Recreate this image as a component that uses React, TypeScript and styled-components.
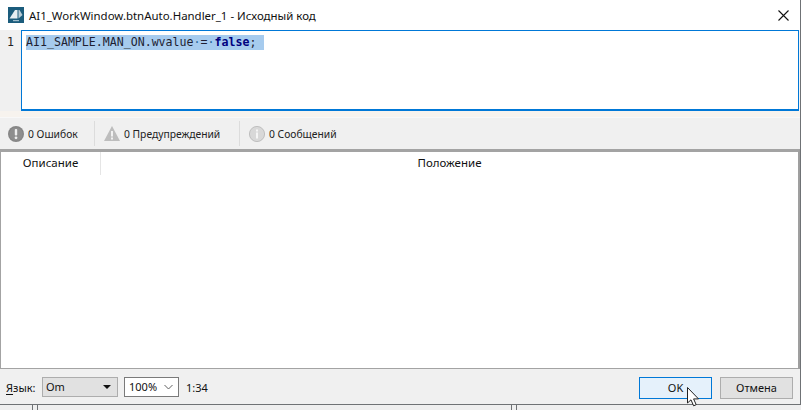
import React from "react";
import styled, { createGlobalStyle } from "styled-components";

const Global = createGlobalStyle`
  html, body { margin: 0; padding: 0; background: #f0f0f0; }
  body { font-family: "Noto Sans", "Open Sans", sans-serif; }
  * { box-sizing: border-box; }
`;
const Page = styled.div`
  width: 801px; height: 410px; overflow: hidden; display: flex; flex-direction: column; position: relative;
`;
const Win = styled.div`
  width: 801px; height: 405px; flex: none; display: flex; flex-direction: column;
  border-right: 1px solid #6f7275; border-bottom: 1px solid #6f7275; background: #f0f0f0;
`;
const Backdrop = styled.div`
  flex: 1; display: flex; background: #efefef;
`;
const Tick = styled.div<{ $ml: number }>`
  width: 1px; background: #6f7275; margin-left: ${p => p.$ml}px;
`;
const Title = styled.div`
  height: 30px; flex: none; background: #fff; display: flex; align-items: center; padding-left: 8px;
  color: #111;
`;
const TitleText = styled.span`
  margin-left: 5px; font-family: "Noto Sans", sans-serif; font-size: 11.45px;
`;
const CloseBtn = styled.div`
  margin-left: auto; margin-right: 11px; width: 11px; height: 11px; display: flex;
`;
const EditorRow = styled.div`
  height: 81px; flex: none; display: flex; background: #f5f5f5;
`;
const Gutter = styled.div`
  width: 21px; flex: none; background: #f0f0f0; padding: 5px 0 0 7px;
  font: 11.5px "DejaVu Sans Mono", monospace; color: #222;
`;
const Editor = styled.div`
  flex: 1; margin-right: 1px; background: #fff; border: 1px solid #0078d7; border-bottom-width: 2px; padding: 4px 0 0 4px;
  font: 11.6px/15px "DejaVu Sans Mono", monospace;
`;
const Sel = styled.span`
  display: inline-block; width: 238px; height: 15px; background: #a6cbee; color: #1e1e32; white-space: pre;
`;
const Keyword = styled.b`
  color: #00007f;
`;
const Dot = styled.span`
  color: #2a6a9a;
`;
const Gap = styled.div`
  height: 6px; flex: none; background: #f7f3ee;
`;
const Toolbar = styled.div`
  height: 32px; flex: none; background: #f0f0f0; display: flex; align-items: center; padding-left: 8px;
  border-top: 1px solid #f8f8f8;
`;
const Stat = styled.div<{ $w: number }>`
  width: ${p => p.$w}px; display: flex; align-items: center; gap: 4px; height: 100%;
  font: 10.3px "Noto Sans", sans-serif; color: #222;
`;
const Sep = styled.div`
  width: 1px; height: 25px; background: #dcdcdc; margin-right: 9px;
`;
const Table = styled.div`
  flex: 1; background: #fff; border-top: 3px solid #a3a3a3; border-left: 1px solid #a3a3a3; border-right: 2px solid #9f9f9f; border-bottom: 1px solid #a3a3a3;
`;
const Head = styled.div`
  display: flex; height: 23px; font: 11.5px/22px "Noto Sans", sans-serif; color: #111;
`;
const ColA = styled.div`
  width: 100px; flex: none; text-align: center; border-right: 1px solid #e5e5e5;
`;
const ColB = styled.div`
  flex: 1; text-align: center;
`;
const Footer = styled.div`
  height: 35px; flex: none; background: #f0f0f0; display: flex; align-items: flex-start; padding: 8px 6px 0 6px;
  font: 11px "Noto Sans", sans-serif; color: #111;
`;
const Label = styled.span`
  line-height: 22px; margin-right: 6px; width: 30px;
  u { text-underline-offset: 2px; }
`;
const OmSelect = styled.div`
  width: 76px; height: 20px; background: #e1e1e1; border: 1px solid #adadad; padding: 0 6px 0 3px;
  display: flex; align-items: center; justify-content: space-between; line-height: 18px;
`;
const Caret = styled.div`
  width: 0; height: 0; border-left: 4px solid transparent; border-right: 4px solid transparent; border-top: 4px solid #111;
`;
const ZoomSelect = styled.div`
  width: 55px; height: 20px; margin-left: 6px; background: #fff; border: 1px solid #7a7a7a; padding: 0 5px 0 4px;
  display: flex; align-items: center; justify-content: space-between; line-height: 18px;
`;
const Pos = styled.span`
  margin-left: 7px; line-height: 22px;
`;
const Buttons = styled.div`
  margin-left: auto; display: flex; gap: 8px; padding-right: 1px;
`;
const Btn = styled.div<{ $primary?: boolean }>`
  width: 73px; height: 22px; text-align: center; line-height: 20px; font-size: 11px;
  background: ${p => (p.$primary ? "#e5f1fb" : "#e1e1e1")};
  border: 1px solid ${p => (p.$primary ? "#0078d7" : "#adadad")};
`;
const Cursor = styled.svg`
  position: absolute; left: 687px; top: 387px;
`;

const Logo = () => (
  <svg width="16" height="16" viewBox="0 0 16 16">
    <rect width="16" height="16" fill="#1b5c7c" />
    <path d="M1.5 11.5 L7 3 H9.5 V11.5 Z" fill="#e6eef2" />
    <path d="M10.5 3 H11.5 L14.5 8 L10.5 11.5 Z" fill="#b9cdd8" />
    <rect x="5" y="13" width="6" height="1.2" fill="#9fbccb" />
  </svg>
);
const Close = () => (
  <svg width="11" height="11" viewBox="0 0 11 11">
    <path d="M.5.5l10 10M10.5.5l-10 10" stroke="#111" strokeWidth="1.1" fill="none" />
  </svg>
);
const ErrIcon = () => (
  <svg width="16" height="16" viewBox="0 0 16 16">
    <circle cx="8" cy="8" r="8" fill="#868686" />
    <circle cx="8" cy="8" r="6.6" fill="#8e8e8e" />
    <rect x="6.8" y="3" width="2.4" height="6.5" rx=".8" fill="#eee" />
    <circle cx="8" cy="11.8" r="1.4" fill="#eee" />
  </svg>
);
const WarnIcon = () => (
  <svg width="16" height="15" viewBox="0 0 16 15">
    <path d="M8 0 L16 15 H0 Z" fill="#bdbdbd" />
    <rect x="7" y="5" width="2" height="5.5" fill="#f1f1f1" />
    <rect x="7" y="11.5" width="2" height="2" fill="#f1f1f1" />
  </svg>
);
const InfoIcon = () => (
  <svg width="16" height="16" viewBox="0 0 16 16">
    <circle cx="8" cy="8" r="7.6" fill="#d8d8d8" stroke="#b5b5b5" strokeWidth=".8" />
    <rect x="7" y="6.5" width="2" height="6" fill="#f5f5f5" />
    <rect x="7" y="3.5" width="2" height="2" fill="#f5f5f5" />
  </svg>
);
const Chevron = () => (
  <svg width="9" height="6" viewBox="0 0 9 6">
    <path d="M.5 1l4 4 4-4" stroke="#606060" fill="none" />
  </svg>
);

export default function App() {
  return (
    <Page>
      <Global />
      <Win>
        <Title>
          <Logo />
          <TitleText>AI1_WorkWindow.btnAuto.Handler_1 - Исходный код</TitleText>
          <CloseBtn><Close /></CloseBtn>
        </Title>
        <EditorRow>
          <Gutter>1</Gutter>
          <Editor>
            <Sel>AI1_SAMPLE.MAN_ON.wvalue<Dot>·</Dot>=<Dot>·</Dot><Keyword>false</Keyword>;</Sel>
          </Editor>
        </EditorRow>
        <Gap />
        <Toolbar>
          <Stat $w={86}><ErrIcon />0 Ошибок</Stat>
          <Sep />
          <Stat $w={135}><WarnIcon />0 Предупреждений</Stat>
          <Sep />
          <Stat $w={110}><InfoIcon />0 Сообщений</Stat>
        </Toolbar>
        <Table>
          <Head>
            <ColA>Описание</ColA>
            <ColB>Положение</ColB>
          </Head>
        </Table>
        <Footer>
          <Label><u>Я</u>зык:</Label>
          <OmSelect>Om<Caret /></OmSelect>
          <ZoomSelect>100%<Chevron /></ZoomSelect>
          <Pos>1:34</Pos>
          <Buttons>
            <Btn $primary>OK</Btn>
            <Btn>Отмена</Btn>
          </Buttons>
        </Footer>
      </Win>
      <Backdrop>
        <Tick $ml={32} />
        <Tick $ml={4} />
        <Tick $ml={473} />
        <Tick $ml={4} />
      </Backdrop>
      <Cursor width="13" height="20" viewBox="0 0 13 20">
        <path d="M.5.5V16l3.5-3.2 2.6 6 2.6-1.1-2.6-5.8H11.5Z" fill="#fff" stroke="#222" strokeWidth="1" />
      </Cursor>
    </Page>
  );
}
